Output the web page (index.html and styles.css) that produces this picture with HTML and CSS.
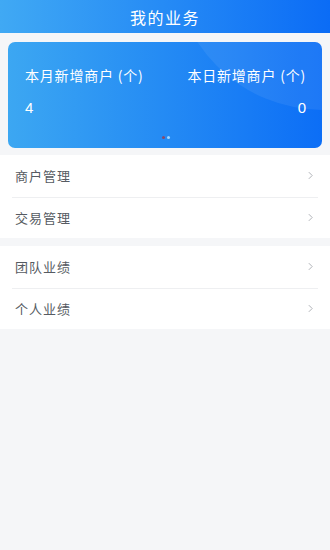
FILE: index.html
```html
<!DOCTYPE html>
<html lang="zh">
<head>
<meta charset="utf-8">
<link rel="stylesheet" href="styles.css">
</head>
<body>
<header class="topbar"><h1 class="title">我的业务</h1></header>
<main class="content">
  <section class="card">
    <div class="glow"></div>
    <div class="stats">
      <div class="stat">
        <div class="label">本月新增商户 (个)</div>
        <div class="num">4</div>
      </div>
      <div class="stat right">
        <div class="label">本日新增商户 (个)</div>
        <div class="num">0</div>
      </div>
    </div>
    <div class="dots"><span class="dot active"></span><span class="dot"></span></div>
  </section>
  <ul class="group first">
    <li class="row"><span>商户管理</span><svg class="chev" viewBox="0 0 6 10"><path d="M1 1l4 4-4 4" /></svg></li>
    <li class="row"><span>交易管理</span><svg class="chev" viewBox="0 0 6 10"><path d="M1 1l4 4-4 4" /></svg></li>
  </ul>
  <ul class="group">
    <li class="row"><span>团队业绩</span><svg class="chev" viewBox="0 0 6 10"><path d="M1 1l4 4-4 4" /></svg></li>
    <li class="row"><span>个人业绩</span><svg class="chev" viewBox="0 0 6 10"><path d="M1 1l4 4-4 4" /></svg></li>
  </ul>
</main>
</body>
</html>
```
FILE: styles.css
```css
* { box-sizing: border-box; }
html, body { margin: 0; padding: 0; }
body {
  background: #f5f6f8;
  font-family: "Noto Sans CJK SC", "Noto Sans", sans-serif;
  width: 330px;
  min-height: 550px;
}
.topbar {
  height: 33px;
  background: linear-gradient(90deg, #40a9f4 0%, #0b6cf6 100%);
  display: flex;
  align-items: center;
  justify-content: center;
}
.title {
  margin: 0;
  color: #fff;
  font-size: 16px;
  font-weight: 400;
  letter-spacing: 1.5px;
  line-height: 1;
}
.content { padding-top: 9px; }
.card {
  position: relative;
  overflow: hidden;
  margin: 0 8px;
  height: 106px;
  border-radius: 7px;
  background: linear-gradient(90deg, #3ca7f2 0%, #0c6ef6 100%);
  padding: 23px 16px 0 17px;
  color: #fff;
}
.glow {
  position: absolute;
  width: 300px;
  height: 300px;
  border-radius: 50%;
  left: 165px;
  top: -232px;
  background: rgba(255,255,255,0.07);
}
.stats {
  position: relative;
  display: flex;
  justify-content: space-between;
}
.stat.right { text-align: right; }
.label {
  font-size: 14px;
  line-height: 20px;
  letter-spacing: 0.8px;
}
.num {
  margin-top: 13px;
  font-family: "Liberation Sans", sans-serif;
  font-size: 15px;
  line-height: 20px;
}
.dots {
  position: relative;
  display: flex;
  justify-content: center;
  gap: 2px;
  margin-top: 18px;
  padding-left: 1px;
}
.dot {
  width: 3px;
  height: 3px;
  border-radius: 50%;
  background: #9fd6ff;
}
.dot.active { background: #8a4a6a; }
.group {
  list-style: none;
  margin: 8px 0 0;
  padding: 0 12px;
  background: #fff;
}
.group.first { margin-top: 7px; }
.row {
  height: 41.5px;
  display: flex;
  align-items: center;
  justify-content: space-between;
  padding: 0 5px 0 3px;
  font-size: 13px;
  color: #565b62;
  letter-spacing: 1px;
}
.row + .row { border-top: 1px solid #eeeff1; }
.chev {
  width: 5px;
  height: 9px;
  fill: none;
  stroke: #a9acb1;
  stroke-width: 1.1;
}
```
